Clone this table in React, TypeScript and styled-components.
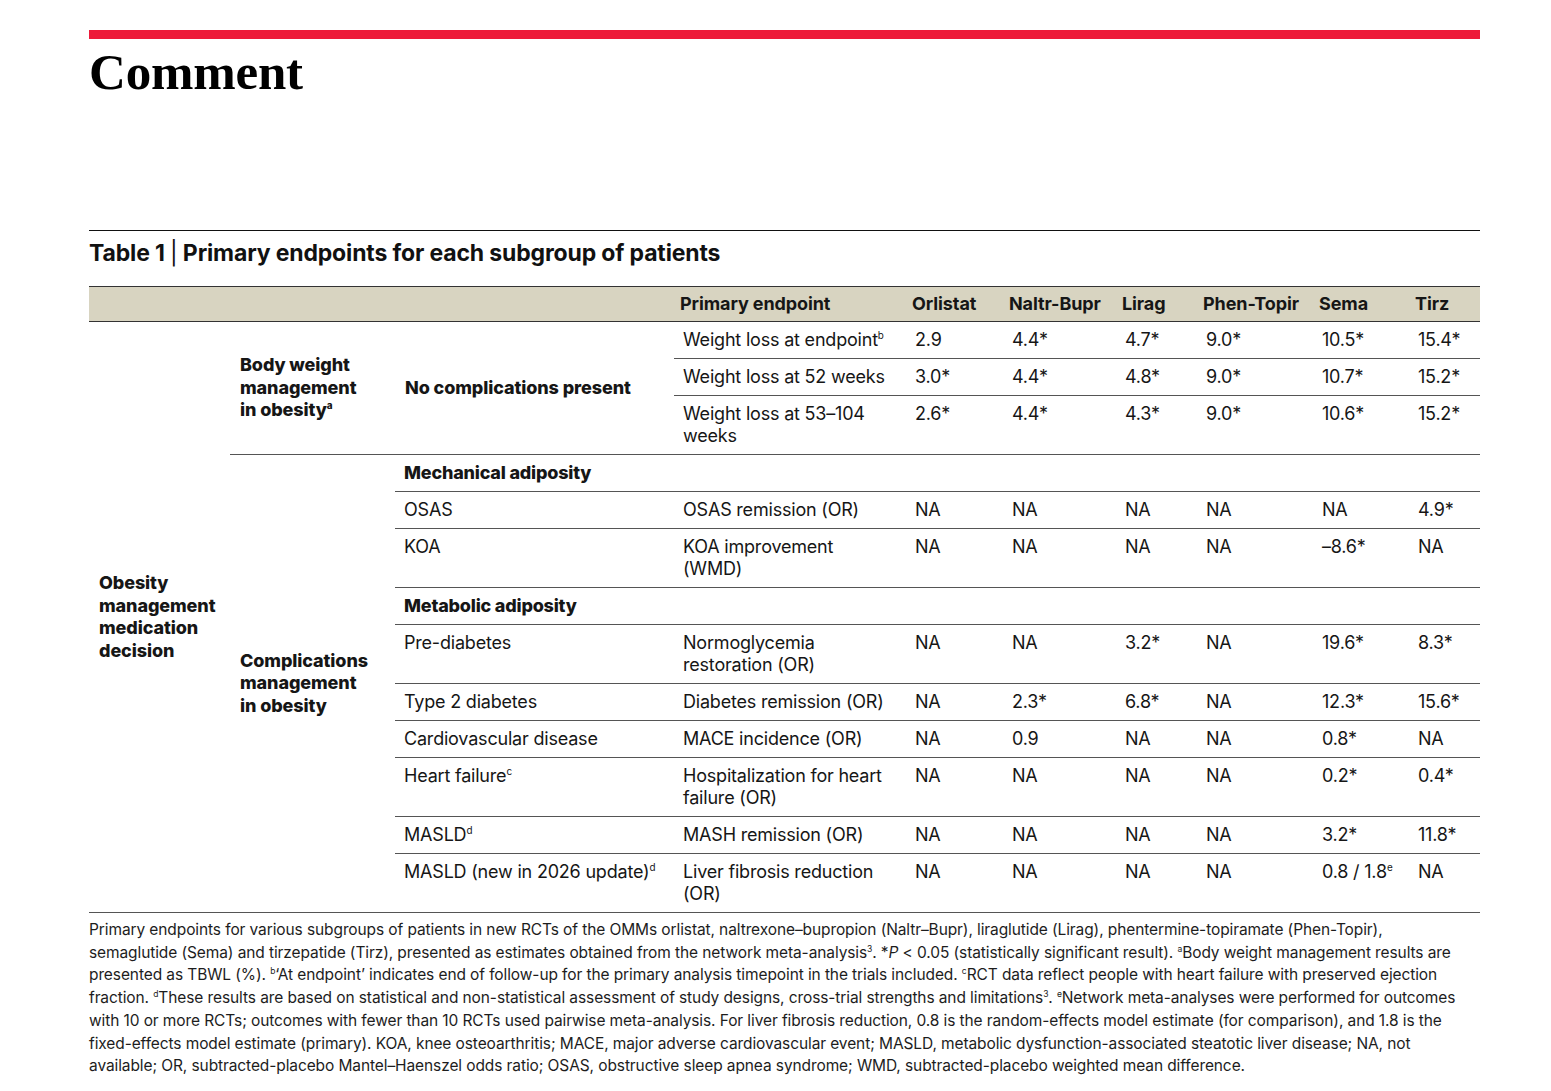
import * as React from "react";
import styled, { createGlobalStyle } from "styled-components";

const Global = createGlobalStyle`
  body {
    margin: 0;
    background: #fff;
    color: #161616;
    font-family: Inter, "Liberation Sans", sans-serif;
  }
`;

const Page = styled.div`
  width: 1391px;
  padding: 30px 0 0 89px;
`;

const RedBar = styled.div`
  height: 9px;
  background: #ed1b3a;
`;

const Heading = styled.h1`
  margin: 3px 0 0;
  font-family: "Liberation Serif", "DejaVu Serif", serif;
  font-weight: 700;
  font-size: 51px;
  line-height: 60px;
  letter-spacing: -0.2px;
  color: #000;
`;

const TableTitle = styled.h2`
  margin: 128px 0 0;
  border-top: 1px solid #111;
  padding-top: 7px;
  font-size: 23px;
  line-height: 30px;
  font-weight: 700;
  letter-spacing: -0.15px;
  color: #111;
`;

const Bar = styled.span`
  font-weight: 400;
`;

const DataTable = styled.table`
  margin-top: 18px;
  width: 1391px;
  border-collapse: collapse;
  table-layout: fixed;
  font-size: 18px;
  line-height: 22px;
`;

const HeadRow = styled.tr`
  background: #d8d4c1;
  border-top: 1px solid #333;
  border-bottom: 1px solid #333;
`;

const HeadCell = styled.th`
  height: 34px;
  padding: 0 6px;
  text-align: left;
  font-weight: 700;
  letter-spacing: -0.1px;
  white-space: nowrap;
`;

const GroupCell = styled.td<{ $ruled?: boolean; $inset?: number }>`
  padding: 0 ${(p) => p.$inset ?? 10}px 0 10px;
  vertical-align: middle;
  font-weight: 800;
  font-size: 18px;
  line-height: 22.5px;
  letter-spacing: -0.1px;
  border-bottom: ${(p) => (p.$ruled ? "1px solid #555" : "none")};
`;

const SectionCell = styled.td`
  padding: 7px 9px;
  font-weight: 800;
  letter-spacing: -0.2px;
  border-bottom: 1px solid #555;
`;

const Cell = styled.td`
  padding: 7px 12px 7px 9px;
  vertical-align: top;
  border-bottom: 1px solid #555;
  letter-spacing: -0.2px;
`;

const Sup = styled.sup`
  font-size: 0.55em;
  line-height: 0;
  vertical-align: 0.7em;
`;

const Footnote = styled.div`
  margin-top: 6px;
  font-size: 15.5px;
  line-height: 22.7px;
  letter-spacing: -0.1px;
  color: #1d1d1d;
`;

const NoteLine = styled.div`
  white-space: nowrap;
`;

const drugs = ["Orlistat", "Naltr-Bupr", "Lirag", "Phen-Topir", "Sema", "Tirz"];
const widths = [141, 165, 279, 232, 97, 113, 81, 116, 96, 71];

type Row = {
  label?: React.ReactNode;
  endpoint: React.ReactNode;
  values: React.ReactNode[];
};

const weightRows: Row[] = [
  {
    endpoint: (
      <>
        Weight loss at endpoint<Sup>b</Sup>
      </>
    ),
    values: ["2.9", "4.4*", "4.7*", "9.0*", "10.5*", "15.4*"],
  },
  { endpoint: "Weight loss at 52 weeks", values: ["3.0*", "4.4*", "4.8*", "9.0*", "10.7*", "15.2*"] },
  { endpoint: "Weight loss at 53–104 weeks", values: ["2.6*", "4.4*", "4.3*", "9.0*", "10.6*", "15.2*"] },
];

const mechanicalRows: Row[] = [
  { label: "OSAS", endpoint: "OSAS remission (OR)", values: ["NA", "NA", "NA", "NA", "NA", "4.9*"] },
  { label: "KOA", endpoint: "KOA improvement (WMD)", values: ["NA", "NA", "NA", "NA", "–8.6*", "NA"] },
];

const metabolicRows: Row[] = [
  { label: "Pre-diabetes", endpoint: "Normoglycemia restoration (OR)", values: ["NA", "NA", "3.2*", "NA", "19.6*", "8.3*"] },
  { label: "Type 2 diabetes", endpoint: "Diabetes remission (OR)", values: ["NA", "2.3*", "6.8*", "NA", "12.3*", "15.6*"] },
  { label: "Cardiovascular disease", endpoint: "MACE incidence (OR)", values: ["NA", "0.9", "NA", "NA", "0.8*", "NA"] },
  {
    label: (
      <>
        Heart failure<Sup>c</Sup>
      </>
    ),
    endpoint: "Hospitalization for heart failure (OR)",
    values: ["NA", "NA", "NA", "NA", "0.2*", "0.4*"],
  },
  {
    label: (
      <>
        MASLD<Sup>d</Sup>
      </>
    ),
    endpoint: "MASH remission (OR)",
    values: ["NA", "NA", "NA", "NA", "3.2*", "11.8*"],
  },
  {
    label: (
      <>
        MASLD (new in 2026 update)<Sup>d</Sup>
      </>
    ),
    endpoint: "Liver fibrosis reduction (OR)",
    values: [
      "NA",
      "NA",
      "NA",
      "NA",
      <>
        0.8 / 1.8<Sup>e</Sup>
      </>,
      "NA",
    ],
  },
];

const DataCells = ({ row }: { row: Row }) => (
  <>
    <Cell>{row.endpoint}</Cell>
    {row.values.map((v, i) => (
      <Cell key={i}>{v}</Cell>
    ))}
  </>
);

export default function App() {
  return (
    <Page>
      <Global />
      <RedBar />
      <Heading>Comment</Heading>
      <TableTitle>
        Table 1 <Bar>|</Bar> Primary endpoints for each subgroup of patients
      </TableTitle>
      <DataTable>
        <colgroup>
          {widths.map((w, i) => (
            <col key={i} style={{ width: w }} />
          ))}
        </colgroup>
        <thead>
          <HeadRow>
            <HeadCell />
            <HeadCell />
            <HeadCell />
            <HeadCell>Primary endpoint</HeadCell>
            {drugs.map((d) => (
              <HeadCell key={d}>{d}</HeadCell>
            ))}
          </HeadRow>
        </thead>
        <tbody>
          {weightRows.map((row, i) => (
            <tr key={"w" + i}>
              {i === 0 && (
                <>
                  <GroupCell rowSpan={13} $ruled $inset={6}>
                    Obesity management medication decision
                  </GroupCell>
                  <GroupCell rowSpan={3} $ruled $inset={24}>
                    Body weight management in obesity<Sup>a</Sup>
                  </GroupCell>
                  <GroupCell rowSpan={3} $ruled>
                    No complications present
                  </GroupCell>
                </>
              )}
              <DataCells row={row} />
            </tr>
          ))}
          <tr>
            <GroupCell rowSpan={10} $ruled $inset={24}>
              Complications management in obesity
            </GroupCell>
            <SectionCell colSpan={8}>Mechanical adiposity</SectionCell>
          </tr>
          {mechanicalRows.map((row, i) => (
            <tr key={"m" + i}>
              <Cell>{row.label}</Cell>
              <DataCells row={row} />
            </tr>
          ))}
          <tr>
            <SectionCell colSpan={8}>Metabolic adiposity</SectionCell>
          </tr>
          {metabolicRows.map((row, i) => (
            <tr key={"x" + i}>
              <Cell>{row.label}</Cell>
              <DataCells row={row} />
            </tr>
          ))}
        </tbody>
      </DataTable>
      <Footnote>
        <NoteLine>
          Primary endpoints for various subgroups of patients in new RCTs of the OMMs orlistat, naltrexone–bupropion
          (Naltr–Bupr), liraglutide (Lirag), phentermine-topiramate (Phen-Topir),
        </NoteLine>
        <NoteLine>
          semaglutide (Sema) and tirzepatide (Tirz), presented as estimates obtained from the network meta-analysis
          <Sup>3</Sup>. *<i>P</i> &lt; 0.05 (statistically significant result). <Sup>a</Sup>Body weight management
          results are
        </NoteLine>
        <NoteLine>
          presented as TBWL (%). <Sup>b</Sup>‘At endpoint’ indicates end of follow-up for the primary analysis
          timepoint in the trials included. <Sup>c</Sup>RCT data reflect people with heart failure with preserved
          ejection
        </NoteLine>
        <NoteLine>
          fraction. <Sup>d</Sup>These results are based on statistical and non-statistical assessment of study designs,
          cross-trial strengths and limitations<Sup>3</Sup>. <Sup>e</Sup>Network meta-analyses were performed for
          outcomes
        </NoteLine>
        <NoteLine>
          with 10 or more RCTs; outcomes with fewer than 10 RCTs used pairwise meta-analysis. For liver fibrosis
          reduction, 0.8 is the random-effects model estimate (for comparison), and 1.8 is the
        </NoteLine>
        <NoteLine>
          fixed-effects model estimate (primary). KOA, knee osteoarthritis; MACE, major adverse cardiovascular event;
          MASLD, metabolic dysfunction-associated steatotic liver disease; NA, not
        </NoteLine>
        <NoteLine>
          available; OR, subtracted-placebo Mantel–Haenszel odds ratio; OSAS, obstructive sleep apnea syndrome; WMD,
          subtracted-placebo weighted mean difference.
        </NoteLine>
      </Footnote>
    </Page>
  );
}
